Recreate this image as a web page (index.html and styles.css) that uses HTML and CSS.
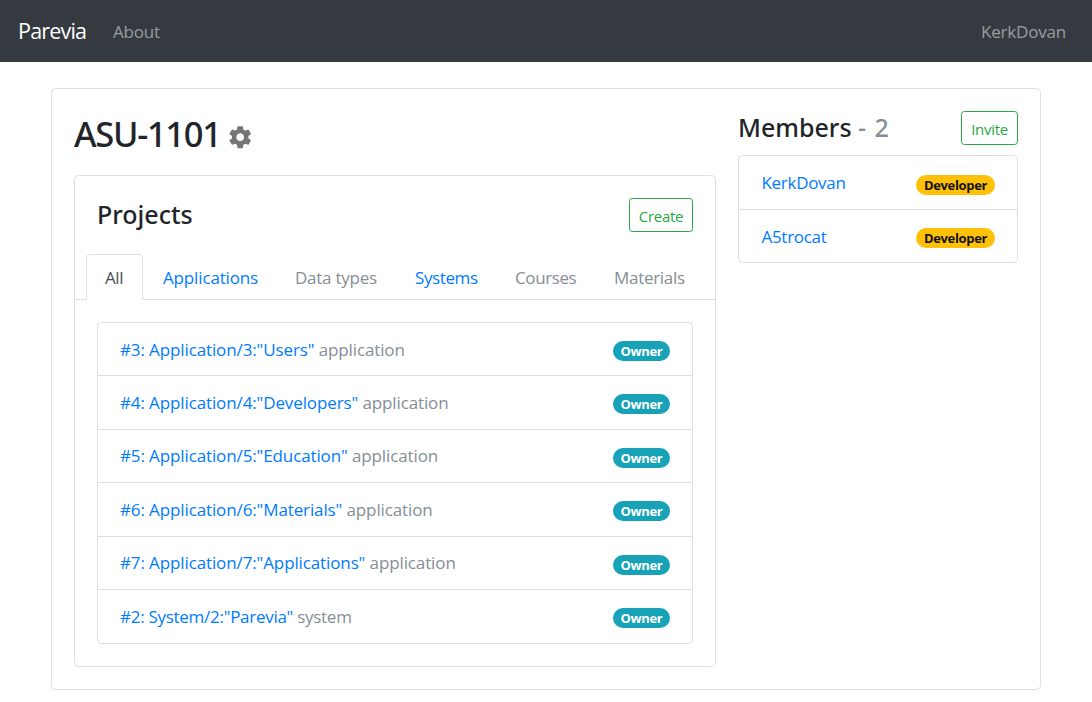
FILE: index.html
```html
<!DOCTYPE html>
<html lang="en">
<head>
<meta charset="utf-8">
<title>Parevia</title>
<link rel="stylesheet" href="styles.css">
</head>
<body>
<nav class="navbar">
  <a class="brand" href="#">Parevia</a>
  <a class="nav-link" href="#">About</a>
  <a class="nav-link user" href="#">KerkDovan</a>
</nav>
<main class="card page">
  <section class="main-col">
    <h1 class="title"><span class="title-text">ASU-1101</span>
      <svg class="gear" viewBox="0 0 24 24"><path fill="#757575" d="M19.43 12.98c.04-.32.07-.64.07-.98s-.03-.66-.07-.98l2.11-1.65c.19-.15.24-.42.12-.64l-2-3.46c-.12-.22-.39-.3-.61-.22l-2.49 1c-.52-.4-1.08-.73-1.69-.98l-.38-2.65C14.46 2.18 14.25 2 14 2h-4c-.25 0-.46.18-.49.42l-.38 2.65c-.61.25-1.17.59-1.69.98l-2.49-1c-.23-.09-.49 0-.61.22l-2 3.46c-.13.22-.07.49.12.64l2.11 1.65c-.04.32-.07.65-.07.98s.03.66.07.98l-2.11 1.65c-.19.15-.24.42-.12.64l2 3.46c.12.22.39.3.61.22l2.49-1c.52.4 1.08.73 1.69.98l.38 2.65c.03.24.24.42.49.42h4c.25 0 .46-.18.49-.42l.38-2.65c.61-.25 1.17-.59 1.69-.98l2.49 1c.23.09.49 0 .61-.22l2-3.46c.12-.22.07-.49-.12-.64l-2.11-1.65zM12 15.5c-1.93 0-3.5-1.57-3.5-3.5s1.57-3.5 3.5-3.5 3.5 1.57 3.5 3.5-1.57 3.5-3.5 3.5z"/></svg>
    </h1>
    <div class="card projects">
      <div class="head"><h2 class="heading">Projects</h2><button class="btn create">Create</button></div>
      <div class="tabs">
        <a class="tab active">All</a>
        <a class="tab apps">Applications</a>
        <a class="tab disabled types">Data types</a>
        <a class="tab systems">Systems</a>
        <a class="tab disabled courses">Courses</a>
        <a class="tab disabled materials">Materials</a>
      </div>
      <ul class="list project-list">
        <li class="item"><span class="muted"><a class="link" href="#">#3: Application/3:"Users"</a> application</span><span class="badge owner">Owner</span></li>
        <li class="item"><span class="muted"><a class="link" href="#">#4: Application/4:"Developers"</a> application</span><span class="badge owner">Owner</span></li>
        <li class="item"><span class="muted"><a class="link" href="#">#5: Application/5:"Education"</a> application</span><span class="badge owner">Owner</span></li>
        <li class="item"><span class="muted"><a class="link" href="#">#6: Application/6:"Materials"</a> application</span><span class="badge owner">Owner</span></li>
        <li class="item"><span class="muted"><a class="link" href="#">#7: Application/7:"Applications"</a> application</span><span class="badge owner">Owner</span></li>
        <li class="item"><span class="muted"><a class="link" href="#">#2: System/2:"Parevia"</a> system</span><span class="badge owner">Owner</span></li>
      </ul>
    </div>
  </section>
  <aside class="side-col">
    <div class="head side-head"><h2 class="heading">Members <span class="muted">- 2</span></h2><button class="btn invite">Invite</button></div>
    <ul class="list">
      <li class="item"><a class="link" href="#">KerkDovan</a><span class="badge developer">Developer</span></li>
      <li class="item"><a class="link" href="#">A5trocat</a><span class="badge developer">Developer</span></li>
    </ul>
  </aside>
</main>
</body>
</html>
```
FILE: styles.css
```css
* { box-sizing: border-box; }
body {
  margin: 0;
  background: #fff;
  color: #212529;
  font-family: "Open Sans", "Noto Sans", sans-serif;
  font-size: 17px;
  font-weight: 400;
  letter-spacing: -0.4px;
  line-height: 26px;
}
a { color: #007bff; text-decoration: none; }
h1, h2, ul { margin: 0; padding: 0; }
.navbar {
  display: flex;
  align-items: center;
  height: 62px;
  padding: 0 26px 0 18px;
  background: #343a40;
}
.navbar .brand { width: 95px; color: #fff; font-size: 21.5px; letter-spacing: -0.8px; }
.navbar .nav-link { color: #9a9d9f; padding-top: 1px; letter-spacing: -0.2px; }
.user { margin-left: auto; }
.card { border: 1px solid #dfdfdf; border-radius: 4.4px; }
.page {
  display: flex;
  gap: 22px;
  width: 990px;
  height: 602px;
  margin: 26px 0 0 51px;
  padding: 22px;
}
.main-col { width: 642px; }
.side-col { width: 280px; }
.title {
  display: flex;
  align-items: center;
  height: 46px;
  margin-bottom: 18px;
  font-family: "Noto Sans", "Open Sans", sans-serif;
  font-size: 34.5px;
  font-weight: 500;
  letter-spacing: -1.3px;
  white-space: nowrap;
}
.title-text { width: 153px; }
.gear { width: 26.4px; height: 26.4px; margin-top: 6px; }
.projects { height: 492px; padding-top: 22px; }
.head { display: flex; justify-content: space-between; height: 34px; padding: 0 22px; }
.heading {
  font-family: "Noto Sans", "Open Sans", sans-serif;
  font-size: 25px;
  font-weight: 500;
  line-height: 33px;
  letter-spacing: 0;
}
.heading .muted { letter-spacing: 0.9px; }
.side-head { height: 44px; padding: 0; }
.btn {
  height: 34px;
  padding: 2px 0 0;
  border: 1px solid #28a745;
  border-radius: 3.3px;
  background: transparent;
  color: #28a745;
  font: inherit;
  font-size: 15px;
  letter-spacing: -0.3px;
}
.create { width: 64px; }
.invite { width: 57px; }
.tabs { display: flex; height: 46px; margin-top: 22px; padding-left: 11px; border-bottom: 1px solid #dfdfdf; }
.tab {
  height: 46px;
  padding: 10px 0 0 19px;
  border: 1px solid transparent;
  border-bottom: 0;
  white-space: nowrap;
}
.tab.active { width: 57px; padding-left: 18px; border-color: #dfdfdf; border-radius: 4.4px 4.4px 0 0; background: #fff; color: #495057; }
.apps { width: 133px; letter-spacing: -0.15px; }
.types { width: 119px; padding-left: 18px; letter-spacing: -0.25px; }
.systems { width: 100px; }
.courses { width: 99px; }
.materials { letter-spacing: -0.3px; }
.disabled, .muted { color: #868e96; }
.list { border: 1px solid #dfdfdf; border-radius: 4.4px; list-style: none; }
.project-list { margin: 22px 22px 0; letter-spacing: -0.12px; }
.item { display: flex; justify-content: space-between; align-items: center; height: 53.5px; padding: 0 22px; white-space: nowrap; }
.item:first-child { height: 52.4px; padding-top: 1px; }
.item + .item { border-top: 1px solid #dfdfdf; }
.project-list .item:last-child { letter-spacing: -0.28px; }
.side-col .item { height: 53px; padding-top: 1px; }
.side-col .item:first-child { padding-top: 1px; }
.side-col .link { padding-left: 0.5px; letter-spacing: -0.3px; }
.badge {
  height: 20px;
  margin-top: 3px;
  border-radius: 10px;
  font-size: 13px;
  font-weight: 700;
  line-height: 21px;
  letter-spacing: -0.35px;
  text-align: center;
}
.owner { width: 57px; background: #17a2b8; color: #fff; }
.developer { width: 79px; background: #ffc107; color: #111; }
```
